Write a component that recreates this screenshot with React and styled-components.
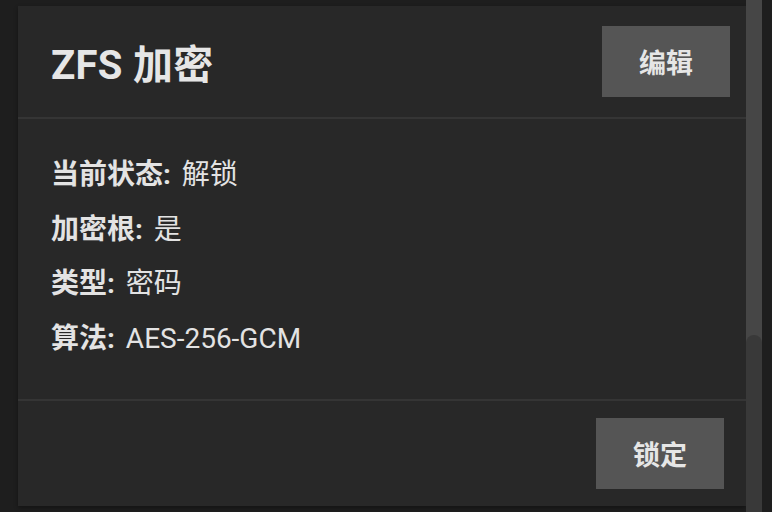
import styled, { createGlobalStyle } from "styled-components";

const GlobalStyle = createGlobalStyle`
  html, body {
    margin: 0;
    padding: 0;
    background: #1e1e1e;
    overflow: hidden;
  }
  body {
    font-family: Roboto, "Noto Sans CJK SC", sans-serif;
    color: #e3e3e3;
  }
`;

const Page = styled.div`
  width: 772px;
  height: 512px;
  display: flex;
  background: #1e1e1e;
  overflow: hidden;
`;

const Main = styled.div`
  flex: 1;
  padding: 6px 0 0 18px;
`;

const Card = styled.section`
  background: #282828;
  height: 500px;
  display: flex;
  flex-direction: column;
  box-shadow: 0 2px 4px rgba(0, 0, 0, 0.35);
`;

const Header = styled.header`
  display: flex;
  align-items: center;
  justify-content: space-between;
  height: 113px;
  padding: 0 16px 0 33px;
  border-bottom: 2px solid #353535;
  box-sizing: border-box;
`;

const Title = styled.h1`
  margin: 0;
  font-size: 40px;
  font-weight: 700;
  color: #e6e6e6;
  letter-spacing: 0.3px;
`;

const Button = styled.button`
  all: unset;
  width: 128px;
  height: 71px;
  background: #555555;
  color: #e6e6e6;
  font-family: Roboto, "Noto Sans CJK SC", sans-serif;
  font-size: 27px;
  font-weight: 700;
  display: flex;
  align-items: center;
  justify-content: center;
  cursor: pointer;
`;

const Body = styled.div`
  flex: 1;
  padding: 29px 33px 0;
  display: flex;
  flex-direction: column;
  border-bottom: 2px solid #353535;
`;

const Row = styled.div`
  font-size: 28px;
  line-height: 54.5px;
  color: #e3e3e3;
`;

const Label = styled.b`
  font-weight: 700;
  margin-right: 4px;
`;

const Footer = styled.footer`
  height: 105px;
  display: flex;
  align-items: center;
  justify-content: flex-end;
  padding: 0 22px 0 0;
  box-sizing: border-box;
`;

const Scrollbar = styled.div`
  width: 16px;
  background: #464646;
  display: flex;
  flex-direction: column;
`;

const Thumb = styled.div`
  margin-top: 335px;
  flex: 1;
  background: #393939;
  border-radius: 8px 8px 0 0;
`;

const Edge = styled.div`
  width: 10px;
  background: #1e1e1e;
`;

const rows = [
  ["当前状态", "解锁"],
  ["加密根", "是"],
  ["类型", "密码"],
  ["算法", "AES-256-GCM"],
];

export default function App() {
  return (
    <>
      <GlobalStyle />
      <Page>
        <Main>
          <Card>
            <Header>
              <Title>ZFS 加密</Title>
              <Button>编辑</Button>
            </Header>
            <Body>
              {rows.map(([k, v]) => (
                <Row key={k}>
                  <Label>{k}:</Label> {v}
                </Row>
              ))}
            </Body>
            <Footer>
              <Button>锁定</Button>
            </Footer>
          </Card>
        </Main>
        <Scrollbar>
          <Thumb />
        </Scrollbar>
        <Edge />
      </Page>
    </>
  );
}
